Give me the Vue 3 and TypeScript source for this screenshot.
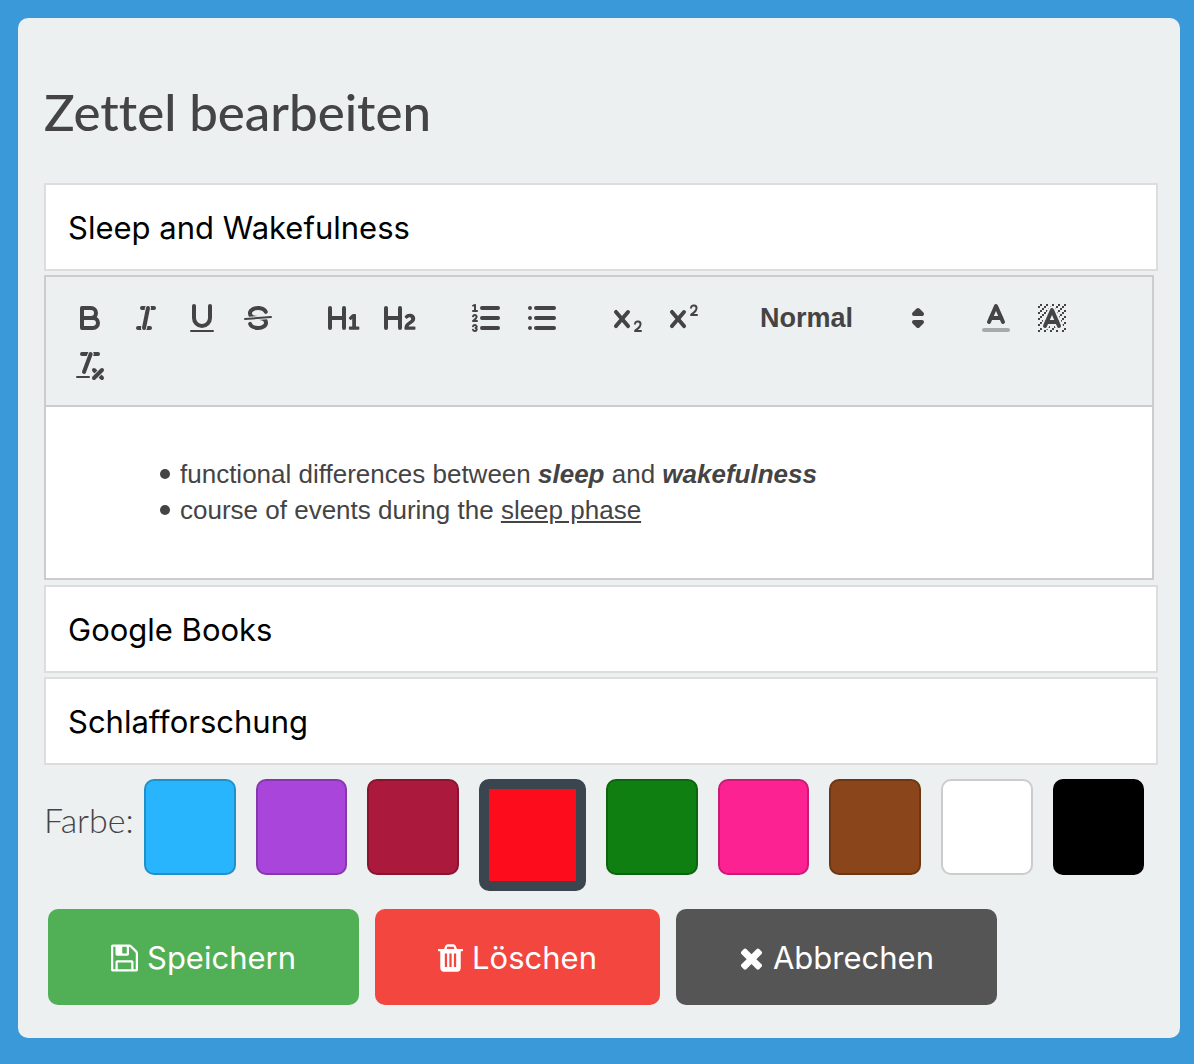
<script setup lang="ts">
import { ref } from 'vue'

interface Swatch {
  name: string
  color: string
}

const title = ref('Sleep and Wakefulness')
const source = ref('Google Books')
const category = ref('Schlafforschung')
const size = ref('normal')
const selected = ref('red')

const swatches: Swatch[] = [
  { name: 'blue', color: '#29b4fe' },
  { name: 'purple', color: '#a945da' },
  { name: 'crimson', color: '#ab1a3c' },
  { name: 'red', color: '#fd0d1b' },
  { name: 'green', color: '#0f7f12' },
  { name: 'pink', color: '#fd2292' },
  { name: 'brown', color: '#8a451a' },
  { name: 'white', color: '#ffffff' },
  { name: 'black', color: '#000000' },
]

// Unit squares of the hatched background-colour icon
const hatch: [number, number][] = [
  [4, 4], [2, 6], [3, 5], [4, 7], [2, 12], [2, 9], [2, 15], [3, 8], [12, 2], [11, 3],
  [2, 3], [6, 2], [3, 2], [5, 3], [9, 2], [15, 14], [13, 7], [15, 5], [14, 6], [15, 8],
  [14, 9], [14, 3], [15, 2], [12, 5], [13, 4], [9, 14], [8, 15], [5, 15], [11, 15],
  [14, 15], [15, 11],
]
</script>

<template>
  <main class="panel">
    <h1>Zettel bearbeiten</h1>
    <form class="form" @submit.prevent>
      <input v-model="title" class="field" type="text" aria-label="Titel" />

      <section class="editor">
        <div class="toolbar" role="toolbar" aria-label="Formatierung">
          <div class="group">
            <button type="button" class="tool" aria-label="Fett">
              <svg viewBox="0 0 18 18">
                <path class="stroke" d="M5,4H9.5A2.5,2.5,0,0,1,12,6.5v0A2.5,2.5,0,0,1,9.5,9H5Z" />
                <path class="stroke" d="M5,9h5.5A2.5,2.5,0,0,1,13,11.5v0A2.5,2.5,0,0,1,10.5,14H5Z" />
              </svg>
            </button>
            <button type="button" class="tool" aria-label="Kursiv">
              <svg viewBox="0 0 18 18">
                <line class="stroke" x1="7" x2="13" y1="4" y2="4" />
                <line class="stroke" x1="5" x2="11" y1="14" y2="14" />
                <line class="stroke halo" x1="8" x2="10" y1="14" y2="4" />
                <line class="stroke" x1="8" x2="10" y1="14" y2="4" />
              </svg>
            </button>
            <button type="button" class="tool" aria-label="Unterstrichen">
              <svg viewBox="0 0 18 18">
                <path class="stroke" d="M5,3V9a4.012,4.012,0,0,0,4,4H9a4.012,4.012,0,0,0,4-4V3" />
                <rect class="fill" height="1" rx="0.5" ry="0.5" width="12" x="3" y="15" />
              </svg>
            </button>
            <button type="button" class="tool" aria-label="Durchgestrichen">
              <svg viewBox="0 0 18 18">
                <line class="stroke thin" x1="15.5" x2="2.5" y1="8.5" y2="9.5" />
                <path class="fill" d="M9.007,8C6.542,7.791,6,7.519,6,6.5,6,5.792,7.283,5,9,5c1.571,0,2.765.679,2.969,1.309a1,1,0,0,0,1.9-.617C13.356,4.106,11.354,3,9,3,6.2,3,4,4.538,4,6.5a3.2,3.2,0,0,0,.5,1.843Z" />
                <path class="fill" d="M8.984,10C11.457,10.208,12,10.479,12,11.5c0,0.708-1.283,1.5-3,1.5-1.571,0-2.765-.679-2.969-1.309a1,1,0,1,0-1.9.617C4.644,13.894,6.646,15,9,15c2.8,0,5-1.538,5-3.5a3.2,3.2,0,0,0-.5-1.843Z" />
              </svg>
            </button>
          </div>

          <div class="group">
            <button type="button" class="tool" aria-label="Überschrift 1">
              <svg viewBox="0 0 18 18">
                <path class="fill" d="M10,4V14a1,1,0,0,1-2,0V10H3v4a1,1,0,0,1-2,0V4A1,1,0,0,1,3,4V8H8V4a1,1,0,0,1,2,0Zm6.06787,9.209H14.98975V7.59863a.54085.54085,0,0,0-.605-.60547h-.62744a1.01119,1.01119,0,0,0-.748.29688L11.645,8.56641a.5435.5435,0,0,0-.022.8584l.28613.30762a.53861.53861,0,0,0,.84717.0332l.09912-.08789a1.2137,1.2137,0,0,0,.2417-.35254h.02246s-.01123.30859-.01123.60547V13.209H12.041a.54085.54085,0,0,0-.605.60547v.43945a.54085.54085,0,0,0,.605.60547h4.02686a.54085.54085,0,0,0,.605-.60547v-.43945A.54085.54085,0,0,0,16.06787,13.209Z" />
              </svg>
            </button>
            <button type="button" class="tool" aria-label="Überschrift 2">
              <svg viewBox="0 0 18 18">
                <path class="fill" d="M16.73975,13.81445v.43945a.54085.54085,0,0,1-.605.60547H11.855a.58392.58392,0,0,1-.64893-.60547V14.0127c0-2.90527,3.39941-3.42187,3.39941-4.55469a.77675.77675,0,0,0-.84717-.78125,1.17684,1.17684,0,0,0-.83594.38477c-.2749.26367-.561.374-.85791.13184l-.4292-.34082c-.30811-.24219-.38525-.51758-.1543-.81445a2.97155,2.97155,0,0,1,2.45361-1.17676,2.45393,2.45393,0,0,1,2.68408,2.40918c0,2.45312-3.1792,2.92676-3.27832,3.93848h2.79443A.54085.54085,0,0,1,16.73975,13.81445ZM9,3A.99974.99974,0,0,0,8,4V8H3V4A1,1,0,0,0,1,4V14a1,1,0,0,0,2,0V10H8v4a1,1,0,0,0,2,0V4A.99974.99974,0,0,0,9,3Z" />
              </svg>
            </button>
          </div>

          <div class="group">
            <button type="button" class="tool" aria-label="Nummerierte Liste">
              <svg viewBox="0 0 18 18">
                <line class="stroke" x1="7" x2="15" y1="4" y2="4" />
                <line class="stroke" x1="7" x2="15" y1="9" y2="9" />
                <line class="stroke" x1="7" x2="15" y1="14" y2="14" />
                <line class="stroke thin" x1="2.5" x2="4.5" y1="5.5" y2="5.5" />
                <path class="fill" d="M3.5,6A0.5,0.5,0,0,1,3,5.5V3.085l-0.276.138A0.5,0.5,0,0,1,2.053,3c-0.124-.247-0.023-0.324.224-0.447l1-.5A0.5,0.5,0,0,1,4,2.5v3A0.5,0.5,0,0,1,3.5,6Z" />
                <path class="stroke thin" d="M4.5,10.5h-2c0-.234,1.85-1.076,1.85-2.234A0.959,0.959,0,0,0,2.5,8.156" />
                <path class="stroke thin" d="M2.5,14.846a0.959,0.959,0,0,0,1.85-.109A0.7,0.7,0,0,0,3.75,14a0.688,0.688,0,0,0,.6-0.736,0.959,0.959,0,0,0-1.85-.109" />
              </svg>
            </button>
            <button type="button" class="tool" aria-label="Aufzählung">
              <svg viewBox="0 0 18 18">
                <line class="stroke" x1="6" x2="15" y1="4" y2="4" />
                <line class="stroke" x1="6" x2="15" y1="9" y2="9" />
                <line class="stroke" x1="6" x2="15" y1="14" y2="14" />
                <line class="stroke" x1="3" x2="3" y1="4" y2="4" />
                <line class="stroke" x1="3" x2="3" y1="9" y2="9" />
                <line class="stroke" x1="3" x2="3" y1="14" y2="14" />
              </svg>
            </button>
          </div>

          <div class="group">
            <button type="button" class="tool" aria-label="Tiefgestellt">
              <svg viewBox="0 0 18 18">
                <path class="fill" d="M15.5,15H13.861a3.858,3.858,0,0,0,1.914-2.975,1.8,1.8,0,0,0-1.6-1.751A1.921,1.921,0,0,0,12.021,11.7a0.50013,0.50013,0,1,0,.957.291h0a0.914,0.914,0,0,1,1.053-.725,0.81,0.81,0,0,1,.744.762c0,1.076-1.16971,1.86982-1.93971,2.43082A1.45639,1.45639,0,0,0,12,15.5a0.5,0.5,0,0,0,.5.5h3A0.5,0.5,0,0,0,15.5,15Z" />
                <path class="fill" d="M9.65,5.241a1,1,0,0,0-1.409.108L6,7.964,3.759,5.349A1,1,0,0,0,2.192,6.59178Q2.21541,6.6213,2.241,6.649L4.684,9.5,2.241,12.35A1,1,0,0,0,3.71,13.70722q0.02557-.02768.049-0.05722L6,11.036,8.241,13.65a1,1,0,1,0,1.567-1.24277Q9.78459,12.3777,9.759,12.35L7.316,9.5,9.759,6.651A1,1,0,0,0,9.65,5.241Z" />
              </svg>
            </button>
            <button type="button" class="tool" aria-label="Hochgestellt">
              <svg viewBox="0 0 18 18">
                <path class="fill" d="M15.5,7H13.861a4.015,4.015,0,0,0,1.914-2.975,1.8,1.8,0,0,0-1.6-1.751A1.922,1.922,0,0,0,12.021,3.7a0.5,0.5,0,1,0,.957.291,0.917,0.917,0,0,1,1.053-.725,0.81,0.81,0,0,1,.744.762c0,1.077-1.164,1.925-1.934,2.486A1.423,1.423,0,0,0,12,7.5a0.5,0.5,0,0,0,.5.5h3A0.5,0.5,0,0,0,15.5,7Z" />
                <path class="fill" d="M9.65,5.241a1,1,0,0,0-1.409.108L6,7.964,3.759,5.349A1,1,0,0,0,2.192,6.59178Q2.21541,6.6213,2.241,6.649L4.684,9.5,2.241,12.35A1,1,0,0,0,3.71,13.70722q0.02557-.02768.049-0.05722L6,11.036,8.241,13.65a1,1,0,1,0,1.567-1.24277Q9.78459,12.3777,9.759,12.35L7.316,9.5,9.759,6.651A1,1,0,0,0,9.65,5.241Z" />
              </svg>
            </button>
          </div>

          <div class="group">
            <div class="picker">
              <select v-model="size" aria-label="Schriftgröße">
                <option value="small">Small</option>
                <option value="normal">Normal</option>
                <option value="large">Large</option>
                <option value="huge">Huge</option>
              </select>
              <svg viewBox="0 0 18 18" aria-hidden="true">
                <polygon class="stroke solid" points="7 11 9 13 11 11 7 11" />
                <polygon class="stroke solid" points="7 7 9 5 11 7 7 7" />
              </svg>
            </div>
          </div>

          <div class="group">
            <button type="button" class="tool" aria-label="Textfarbe">
              <svg viewBox="0 0 18 18">
                <line class="stroke faded" x1="3" x2="15" y1="15" y2="15" />
                <polyline class="stroke" points="5.5 11 9 3 12.5 11" />
                <line class="stroke" x1="11.63" x2="6.38" y1="9" y2="9" />
              </svg>
            </button>
            <button type="button" class="tool" aria-label="Hintergrundfarbe">
              <svg viewBox="0 0 18 18">
                <g class="fill">
                  <rect v-for="[x, y] in hatch" :key="`${x}-${y}`" :x="x" :y="y" width="1" height="1" />
                  <polygon points="6 6.868 6 6 5 6 5 7 5.942 7 6 6.868" />
                  <polygon points="6.817 5 6 5 6 6 6.38 6 6.817 5" />
                  <polygon points="4 11.439 4 11 3 11 3 12 3.755 12 4 11.439" />
                  <polygon points="4.63 10 4 10 4 11 4.192 11 4.63 10" />
                  <polygon points="13.447 10.174 13.808 11 14 11 14 10 13.37 10" />
                  <polygon points="12 6.868 12 6 11.62 6 12 6.868" />
                  <polygon points="12.933 9 13 9 13 8 12.495 8 12.933 9" />
                  <path d="M10.832,4.2L11,4.582V4H10.708A1.948,1.948,0,0,1,10.832,4.2Z" />
                  <path d="M7,4.582L7.168,4.2A1.929,1.929,0,0,1,7.292,4H7V4.582Z" />
                  <path d="M8,13H7.683l-0.351.8a1.933,1.933,0,0,1-.124.2H8V13Z" />
                  <path d="M9,3H8V3.282A1.985,1.985,0,0,1,9,3Z" />
                  <path d="M3.775,14H3v1H4V14.314A1.97,1.97,0,0,1,3.775,14Z" />
                  <path d="M6,14.926V15H7V14.316A1.993,1.993,0,0,1,6,14.926Z" />
                  <path d="M10.668,13.8L10.317,13H10v1h0.792A1.947,1.947,0,0,1,10.668,13.8Z" />
                  <path d="M14.332,12.2a1.99,1.99,0,0,1,.166.8H15V12H14.245Z" />
                </g>
                <polyline class="stroke" points="5.5 13 9 5 12.5 13" />
                <line class="stroke" x1="11.63" x2="6.38" y1="11" y2="11" />
              </svg>
            </button>
          </div>

          <div class="group">
            <button type="button" class="tool" aria-label="Formatierung entfernen">
              <svg viewBox="0 0 18 18">
                <line class="stroke" x1="5" x2="13" y1="3" y2="3" />
                <line class="stroke halo" x1="6" x2="9.35" y1="12" y2="3" />
                <line class="stroke" x1="6" x2="9.35" y1="12" y2="3" />
                <line class="stroke" x1="11" x2="15" y1="11" y2="15" />
                <line class="stroke halo" x1="15" x2="11" y1="11" y2="15" />
                <line class="stroke" x1="15" x2="11" y1="11" y2="15" />
                <rect class="fill" height="1" rx="0.5" ry="0.5" width="7" x="2" y="14" />
              </svg>
            </button>
          </div>
        </div>

        <div class="content" contenteditable="true" spellcheck="false" role="textbox" aria-multiline="true" aria-label="Inhalt">
          <ul>
            <li>functional differences between <strong><em>sleep</em></strong> and <strong><em>wakefulness</em></strong></li>
            <li>course of events during the <u>sleep phase</u></li>
          </ul>
        </div>
      </section>

      <input v-model="source" class="field" type="text" aria-label="Quelle" />
      <input v-model="category" class="field" type="text" aria-label="Kategorie" />

      <div class="colors" role="radiogroup" aria-labelledby="color-label">
        <span id="color-label" class="colors-label">Farbe:</span>
        <input
          v-for="s in swatches"
          :key="s.name"
          v-model="selected"
          class="swatch"
          type="radio"
          name="color"
          :value="s.name"
          :aria-label="s.name"
          :style="{ backgroundColor: s.color }"
        />
      </div>

      <div class="actions">
        <button type="submit" class="action save">
          <svg class="wide" viewBox="128 0 1536 1792" aria-hidden="true">
            <path d="M512 1536h768v-384h-768v384zm896 0h128v-896q0-14-10-38.5t-20-34.5l-281-281q-10-10-34-20t-39-10v416q0 40-28 68t-68 28h-576q-40 0-68-28t-28-68v-416h-128v1280h128v-416q0-40 28-68t68-28h832q40 0 68 28t28 68v416zm-384-928v-320q0-13-9.5-22.5t-22.5-9.5h-192q-13 0-22.5 9.5t-9.5 22.5v320q0 13 9.5 22.5t22.5 9.5h192q13 0 22.5-9.5t9.5-22.5zm640 32v928q0 40-28 68t-68 28h-1344q-40 0-68-28t-28-68v-1344q0-40 28-68t68-28h928q40 0 88 20t76 48l280 280q28 28 48 76t20 88z" />
          </svg>
          <span>Speichern</span>
        </button>
        <button type="button" class="action delete">
          <svg viewBox="192 0 1408 1792" aria-hidden="true">
            <path d="M704 1376v-704q0-14-9-23t-23-9h-64q-14 0-23 9t-9 23v704q0 14 9 23t23 9h64q14 0 23-9t9-23zm256 0v-704q0-14-9-23t-23-9h-64q-14 0-23 9t-9 23v704q0 14 9 23t23 9h64q14 0 23-9t9-23zm256 0v-704q0-14-9-23t-23-9h-64q-14 0-23 9t-9 23v704q0 14 9 23t23 9h64q14 0 23-9t9-23zm-544-992h448l-48-117q-7-9-17-11h-317q-10 2-17 11zm928 32v64q0 14-9 23t-23 9h-96v948q0 83-47 143.5t-113 60.5h-832q-66 0-113-58.5t-47-141.5v-952h-96q-14 0-23-9t-9-23v-64q0-14 9-23t23-9h309l70-167q15-37 54-63t79-26h320q40 0 79 26t54 63l70 167h309q14 0 23 9t9 23z" />
          </svg>
          <span>Löschen</span>
        </button>
        <button type="button" class="action cancel">
          <svg viewBox="192 0 1408 1792" aria-hidden="true">
            <path d="M1490 1322q0 40-28 68l-136 136q-28 28-68 28t-68-28l-294-294-294 294q-28 28-68 28t-68-28l-136-136q-28-28-28-68t28-68l294-294-294-294q-28-28-28-68t28-68l136-136q28-28 68-28t68 28l294 294 294-294q28-28 68-28t68 28l136 136q28 28 28 68t-28 68l-294 294 294 294q28 28 28 68z" />
          </svg>
          <span>Abbrechen</span>
        </button>
      </div>
    </form>
  </main>
</template>

<style>
body {
  background: #3a99d9;
}
</style>

<style scoped>
.panel {
  margin: 18px 14px 26px 18px;
  padding: 62px 22px 33px 26px;
  border-radius: 10px;
  background: #ecf0f1;
  color: #444;
}

h1 {
  margin: 0 0 39px;
  font: 500 51px/64px Lato, sans-serif;
  font-variant-ligatures: none;
}

.form {
  display: flex;
  flex-direction: column;
}

.field {
  box-sizing: border-box;
  width: 100%;
  height: 88px;
  margin: 0 0 4px;
  padding: 0 22px;
  border: 2px solid #ddd;
  border-radius: 0;
  outline: none;
  background: #fff;
  color: #000;
  font: 400 31px/40px Inter, sans-serif;
}

.editor {
  margin: 0 4px 5px 0;
  border: 2px solid #ccc;
  background: #fff;
}

.toolbar {
  display: flex;
  flex-wrap: wrap;
  padding: 17px 16px 15px;
  border-bottom: 2px solid #ccc;
  background: #ecf0f1;
}

.group {
  display: flex;
  margin-right: 30px;
}

.tool {
  width: 56px;
  height: 48px;
  padding: 6px 10px;
  border: 0;
  background: none;
  cursor: pointer;
}

.tool svg {
  display: block;
  width: 36px;
  height: 36px;
}

.stroke {
  fill: none;
  stroke: #444;
  stroke-width: 2;
  stroke-linecap: round;
  stroke-linejoin: round;
}

.thin {
  stroke-width: 1;
}

/* Clears a hairline around a stroke where it crosses another one */
.halo {
  stroke: #ecf0f1;
  stroke-width: 3;
}

.faded {
  opacity: 0.4;
}

.fill,
.solid {
  fill: #444;
}

.picker {
  display: grid;
  width: 196px;
  height: 48px;
  align-items: center;
}

.picker select,
.picker svg {
  grid-area: 1 / 1;
}

.picker select {
  appearance: none;
  width: 100%;
  height: 48px;
  margin: 0;
  padding: 0 0 0 18px;
  border: 0;
  background: none;
  color: #444;
  font: 700 27px/44px "Liberation Sans", Arial, sans-serif;
}

.picker svg {
  width: 36px;
  height: 36px;
  margin-right: 2px;
  justify-self: end;
  pointer-events: none;
}

.content {
  padding: 49px 30px 50px;
  outline: none;
  font: 400 26px/36px "Liberation Sans", Arial, sans-serif;
}

.content ul {
  margin: 0;
  padding: 0 0 0 84px;
  list-style: none;
}

.content li::before {
  content: "";
  display: inline-block;
  width: 10px;
  height: 10px;
  margin-right: 10px;
  border-radius: 50%;
  background: #444;
  vertical-align: 4px;
}

.colors {
  display: flex;
  align-items: flex-start;
  gap: 20px;
  min-height: 112px;
  margin: 10px 14px 0 0;
}

.colors-label {
  width: 80px;
  padding-top: 20px;
  font: 300 34px/42px Lato, sans-serif;
}

.swatch {
  appearance: none;
  box-sizing: content-box;
  flex: 1 1 0;
  min-width: 0;
  height: 92px;
  margin: 0;
  border: 2px solid rgba(0, 0, 0, 0.2);
  border-radius: 10px;
  cursor: pointer;
}

.swatch:checked {
  border: 10px solid #3b4550;
}

.actions {
  display: flex;
  flex-wrap: wrap;
  gap: 16px;
  margin: 18px 0 0 4px;
}

.action {
  display: flex;
  align-items: center;
  gap: 9px;
  height: 96px;
  padding: 1px 63px 0;
  border: 0;
  border-radius: 10px;
  color: #fff;
  font: 400 31px/40px Inter, sans-serif;
  cursor: pointer;
}

.action svg {
  width: 25px;
  height: 32px;
  fill: currentColor;
}

.action svg.wide {
  width: 27px;
}

.save {
  background: #51af56;
}

.delete {
  background: #f3463f;
}

.cancel {
  background: #555;
}
</style>
